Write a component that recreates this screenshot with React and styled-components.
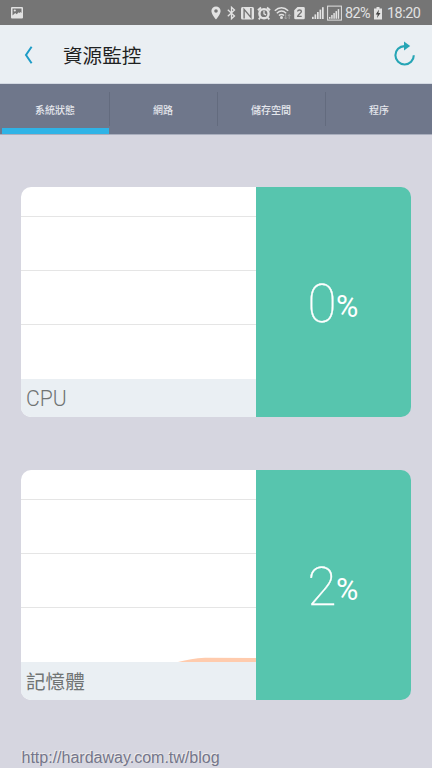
import React from "react";
import styled, { createGlobalStyle } from "styled-components";

const GlobalStyle = createGlobalStyle`
  * { box-sizing: border-box; }
  body { margin: 0; background: #d6d6e0; overflow: hidden; }
`;

const Screen = styled.div`
  display: flex;
  flex-direction: column;
  width: 432px;
  height: 768px;
  background: #d6d6e0;
  font-family: Roboto, "Noto Sans CJK TC", sans-serif;
  overflow: hidden;
`;

const StatusBar = styled.div`
  display: flex;
  align-items: center;
  flex: none;
  height: 25px;
  padding: 0 12px 0 11px;
  background: #757575;
  color: #e2e2e2;
`;

const Spacer = styled.div`
  flex: 1;
`;

const StatusIcon = styled.svg`
  flex: none;
  display: block;
  width: ${(p) => p.$w}px;
  height: 16px;
  margin-right: ${(p) => p.$gap || 0}px;
  fill: #e2e2e2;
`;

const StatusText = styled.span`
  width: ${(p) => p.$w}px;
  margin-right: ${(p) => p.$gap || 0}px;
  font-size: 14.4px;
  line-height: 25px;
  padding-top: 1px;
  white-space: nowrap;
  letter-spacing: ${(p) => p.$track || 0}px;
`;

const Header = styled.header`
  display: flex;
  align-items: center;
  flex: none;
  height: 59px;
  padding: 1px 16px 0 24px;
  background: #eaeff3;
  border-bottom: 1px solid #d3d9e2;
`;

const BackIcon = styled.svg`
  display: block;
  width: 9px;
  height: 18px;
  margin-right: 30px;
`;

const Title = styled.h1`
  flex: 1;
  margin: 0;
  padding-top: 4px;
  font-size: 19.6px;
  line-height: 28px;
  font-weight: 400;
  color: #1f2222;
`;

const RefreshIcon = styled.svg`
  display: block;
  width: 22px;
  height: 26px;
  margin-bottom: 2px;
`;

const Tabs = styled.nav`
  display: grid;
  grid-template-columns: repeat(4, 108px);
  flex: none;
  height: 51px;
  padding-left: 1px;
  background: #6f778b;
  border-bottom: 1px solid #a9aebd;
`;

const Tab = styled.div`
  position: relative;
  padding-top: 17.5px;
  text-align: center;
  font-size: 10px;
  font-weight: 500;
  line-height: 18px;
  color: #e4e6ec;

  &::before {
    content: "";
    display: ${(p) => (p.$first ? "none" : "block")};
    position: absolute;
    left: 0;
    top: 8px;
    width: 1px;
    height: 34px;
    background: #636b7e;
  }

  &::after {
    content: "";
    display: ${(p) => (p.$active ? "block" : "none")};
    position: absolute;
    left: 1px;
    bottom: 0;
    width: 107px;
    height: 6px;
    background: #2fb3e6;
  }
`;

const Cards = styled.main`
  display: flex;
  flex-direction: column;
  gap: 52.5px;
  padding: 52px 21px 0;
`;

const Card = styled.section`
  display: grid;
  grid-template-columns: 234.5px 1fr;
  height: 230px;
  border-radius: 10px;
  overflow: hidden;
`;

const ChartSide = styled.div`
  display: flex;
  flex-direction: column;
  background: #fff;
`;

const Chart = styled.svg`
  display: block;
  width: 100%;
  height: 192px;
`;

const CardLabel = styled.div`
  height: 38px;
  padding-left: 5px;
  background: #eaeff3;
  color: #707474;
  font-size: ${(p) => (p.$latin ? 21.2 : 19.6)}px;
  font-weight: ${(p) => (p.$latin ? 300 : 400)};
  line-height: ${(p) => (p.$latin ? 40 : 42)}px;
`;

const Value = styled.div`
  display: flex;
  align-items: baseline;
  padding: 85px 0 0 52px;
  background: #57c5ae;
  color: #fff;
`;

const Digit = styled.span`
  width: 28.5px;
  font-size: 53px;
  line-height: 64px;
  font-weight: 100;
  -webkit-text-stroke: 0.35px #fff;
`;

const Percent = styled.span`
  font-size: 30.5px;
  line-height: 32px;
  font-weight: 400;
  transform: translateY(-5px);
`;

const Watermark = styled.footer`
  padding: 48px 0 0 21.5px;
  font-family: "Liberation Sans", sans-serif;
  font-size: 16px;
  line-height: 20px;
  white-space: nowrap;
  color: #74768a;
  text-shadow: -1px -1px 0 #efeceb;
`;

const cards = [
  { label: "CPU", latin: true, value: 0 },
  { label: "記憶體", latin: false, value: 2, usage: "M157 192 C166 190 174 188 184 187.8 L235 188 V192 Z" },
];

const tabs = ["系統狀態", "網路", "儲存空間", "程序"];

const SignalBars = ({ x = 0 }) => (
  <g transform={`translate(${x} 0)`}>
    {[0, 1, 2, 3, 4].map((i) => (
      <rect key={i} x={i * 2.5} y={11.8 - i * 2.4} width="1.7" height={2.2 + i * 2.4} />
    ))}
  </g>
);

function StatusIcons() {
  return (
    <>
      <StatusIcon $w={10} $gap={6} viewBox="0 0 10 16">
        <path fillRule="evenodd" d="M5 1.5a4.6 4.6 0 0 0-4.6 4.6C.4 9.4 5 14.6 5 14.6s4.6-5.2 4.6-8.5A4.6 4.6 0 0 0 5 1.5Zm0 2.7a1.8 1.8 0 1 1 0 3.6 1.8 1.8 0 0 1 0-3.6Z" />
      </StatusIcon>
      <StatusIcon $w={9} $gap={5} viewBox="0 0 9 16">
        <path d="M.8 4.7 7.5 11 4.5 13.7V2.3L7.5 5 .8 11.3" fill="none" stroke="#e2e2e2" strokeWidth="1.3" />
      </StatusIcon>
      <StatusIcon $w={13} $gap={3} viewBox="0 0 13 16">
        <rect x="0" y="2" width="13" height="12.5" rx="1.5" />
        <path d="M3.1 13.6V4.3L9.9 12.4V3" fill="none" stroke="#757575" strokeWidth="1.4" />
      </StatusIcon>
      <StatusIcon $w={14} $gap={3} viewBox="0 0 14 16">
        <circle cx="7" cy="8.7" r="5.8" />
        <path d="M.9 5.2 4 2.5M13.1 5.2 10 2.5M3.2 12.7 1.7 14.3M10.8 12.7l1.5 1.6" fill="none" stroke="#e2e2e2" strokeWidth="1.8" />
        <circle cx="7" cy="8.7" r="3.4" fill="#757575" />
        <path d="M7 5.7v3.2l2 1" fill="none" stroke="#e2e2e2" strokeWidth="1.3" />
      </StatusIcon>
      <StatusIcon $w={17} $gap={3} viewBox="0 0 17 16">
        <path d="M.8 5.7C4.8 1.7 10.2 1.7 14.2 5.7M2.8 8.2c3-2.7 6.4-2.7 9.4 0M4.9 10.5c1.8-1.5 3.4-1.5 5.2 0" fill="none" stroke="#e2e2e2" strokeWidth="1.4" />
        <circle cx="7.5" cy="12.5" r="1.5" />
        <path d="M11.7 9.2v4.5M10.4 12.5l1.3 1.5 1.3-1.5M15.2 14V9.5M13.9 11l1.3-1.5 1.3 1.5" fill="none" stroke="#a3a3a3" strokeWidth="1" />
      </StatusIcon>
      <StatusIcon $w={11} $gap={7} viewBox="0 0 11 16">
        <path d="M3.5 2H9.5a1.3 1.3 0 0 1 1.3 1.3V13a1.3 1.3 0 0 1-1.3 1.3H1.5A1.3 1.3 0 0 1 .2 13V5.2Z" />
        <path d="M3.6 6.5c.2-2 3.8-1.9 3.8.1 0 1.7-3.6 2.8-3.7 4.8h4" fill="none" stroke="#757575" strokeWidth="1.4" />
      </StatusIcon>
      <StatusIcon $w={13} $gap={2} viewBox="0 0 13 16">
        <SignalBars />
      </StatusIcon>
      <StatusIcon $w={15} $gap={3} viewBox="0 0 15 16">
        <rect x=".6" y="1.1" width="13.8" height="14" fill="none" stroke="#e2e2e2" strokeWidth="1" />
        <g transform="translate(2 2.3) scale(.87 .82)"><SignalBars /></g>
      </StatusIcon>
      <StatusText $w={25} $gap={4} $track={-0.6}>82%</StatusText>
      <StatusIcon $w={8} $gap={5} viewBox="0 0 8 16">
        <path d="M2.5 2h3v1.5H8V14.5H0V3.5h2.5Z" />
        <path d="M5 4.5 1.7 9.4h2L3 13l3.5-5H4.4Z" fill="#444" />
      </StatusIcon>
      <StatusText $w={33} $track={-0.5}>18:20</StatusText>
    </>
  );
}

export default function App() {
  return (
    <Screen>
      <GlobalStyle />
      <StatusBar>
        <StatusIcon $w={12} viewBox="0 0 12 16">
          <path fillRule="evenodd" d="M1 2h10a1 1 0 0 1 1 1v9.5a1 1 0 0 1-1 1H1a1 1 0 0 1-1-1V3a1 1 0 0 1 1-1Zm.5 1.5v7L4.2 8l1.5 1.3 2-2 .8.8 1-1 1 1V3.5Z" />
          <circle cx="3.8" cy="5.5" r="1.1" />
        </StatusIcon>
        <Spacer />
        <StatusIcons />
      </StatusBar>
      <Header>
        <BackIcon viewBox="0 0 9 18">
          <path d="M7.6.8 2 9l5.6 8.2" fill="none" stroke="#1e9cc7" strokeWidth="2" />
        </BackIcon>
        <Title>資源監控</Title>
        <RefreshIcon viewBox="0 0 22 26">
          <path d="M10.5 5.1A9.2 9.2 0 1 0 19.8 14.3" fill="none" stroke="#26a5b5" strokeWidth="2.1" />
          <path d="M10 .5 16.2 5 10 9.5Z" fill="#26a5b5" />
        </RefreshIcon>
      </Header>
      <Tabs>
        {tabs.map((name, i) => (
          <Tab key={name} $first={i === 0} $active={i === 0}>{name}</Tab>
        ))}
      </Tabs>
      <Cards>
        {cards.map((card) => (
          <Card key={card.label}>
            <ChartSide>
              <Chart viewBox="0 0 234.5 192" preserveAspectRatio="none">
                <path d="M0 29.5H235M0 83.5H235M0 137.5H235" stroke="#e5e5e5" strokeWidth="1" />
                {card.usage && <path d={card.usage} fill="#ffcbad" />}
              </Chart>
              <CardLabel $latin={card.latin}>{card.label}</CardLabel>
            </ChartSide>
            <Value>
              <Digit>{card.value}</Digit>
              <Percent>%</Percent>
            </Value>
          </Card>
        ))}
      </Cards>
      <Watermark>http://hardaway.com.tw/blog</Watermark>
    </Screen>
  );
}
